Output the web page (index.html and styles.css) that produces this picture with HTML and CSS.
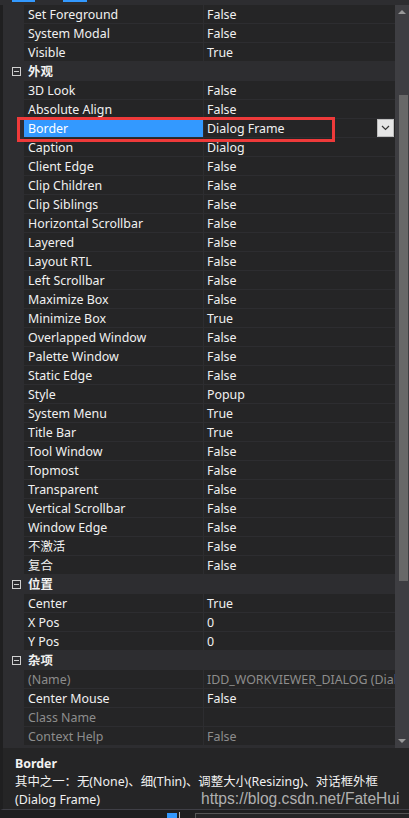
FILE: index.html
```html
<!DOCTYPE html>
<html>
<head>
<meta charset="utf-8">
<link rel="stylesheet" href="styles.css">
</head>
<body>
<div class="page">
  <div class="top"><span class="tab t1"></span><span class="tab t2"></span></div>
  <div class="main">
    <div class="grid">
      <div class="row"><div class="name">Set Foreground</div><div class="val">False</div></div>
      <div class="row"><div class="name">System Modal</div><div class="val">False</div></div>
      <div class="row"><div class="name">Visible</div><div class="val">True</div></div>
      <div class="cat"><span class="box"></span><span class="cat-t">外观</span></div>
      <div class="row"><div class="name">3D Look</div><div class="val">False</div></div>
      <div class="row"><div class="name">Absolute Align</div><div class="val">False</div></div>
      <div class="row sel"><div class="name">Border</div><div class="val">Dialog Frame<span class="dd"><svg width="9" height="6" viewBox="0 0 9 6"><path d="M1 1 L4.5 4.5 L8 1" fill="none" stroke="#333" stroke-width="1.2"/></svg></span></div></div>
      <div class="row"><div class="name">Caption</div><div class="val">Dialog</div></div>
      <div class="row"><div class="name">Client Edge</div><div class="val">False</div></div>
      <div class="row"><div class="name">Clip Children</div><div class="val">False</div></div>
      <div class="row"><div class="name">Clip Siblings</div><div class="val">False</div></div>
      <div class="row"><div class="name">Horizontal Scrollbar</div><div class="val">False</div></div>
      <div class="row"><div class="name">Layered</div><div class="val">False</div></div>
      <div class="row"><div class="name">Layout RTL</div><div class="val">False</div></div>
      <div class="row"><div class="name">Left Scrollbar</div><div class="val">False</div></div>
      <div class="row"><div class="name">Maximize Box</div><div class="val">False</div></div>
      <div class="row"><div class="name">Minimize Box</div><div class="val">True</div></div>
      <div class="row"><div class="name">Overlapped Window</div><div class="val">False</div></div>
      <div class="row"><div class="name">Palette Window</div><div class="val">False</div></div>
      <div class="row"><div class="name">Static Edge</div><div class="val">False</div></div>
      <div class="row"><div class="name">Style</div><div class="val">Popup</div></div>
      <div class="row"><div class="name">System Menu</div><div class="val">True</div></div>
      <div class="row"><div class="name">Title Bar</div><div class="val">True</div></div>
      <div class="row"><div class="name">Tool Window</div><div class="val">False</div></div>
      <div class="row"><div class="name">Topmost</div><div class="val">False</div></div>
      <div class="row"><div class="name">Transparent</div><div class="val">False</div></div>
      <div class="row"><div class="name">Vertical Scrollbar</div><div class="val">False</div></div>
      <div class="row"><div class="name">Window Edge</div><div class="val">False</div></div>
      <div class="row"><div class="name">不激活</div><div class="val">False</div></div>
      <div class="row"><div class="name">复合</div><div class="val">False</div></div>
      <div class="cat"><span class="box"></span><span class="cat-t">位置</span></div>
      <div class="row"><div class="name">Center</div><div class="val">True</div></div>
      <div class="row"><div class="name">X Pos</div><div class="val">0</div></div>
      <div class="row"><div class="name">Y Pos</div><div class="val">0</div></div>
      <div class="cat"><span class="box"></span><span class="cat-t">杂项</span></div>
      <div class="row dim"><div class="name">(Name)</div><div class="val">IDD_WORKVIEWER_DIALOG (Dialog)</div></div>
      <div class="row"><div class="name">Center Mouse</div><div class="val">False</div></div>
      <div class="row dim"><div class="name">Class Name</div><div class="val"></div></div>
      <div class="row dim"><div class="name">Context Help</div><div class="val">False</div></div>
      <div class="redbox"></div>
    </div>
    <div class="scroll">
      <div class="arr up"></div>
      <div class="track"><div class="thumb"></div></div>
      <div class="arr down"></div>
    </div>
  </div>
  <div class="desc">
    <div class="d-title">Border</div>
    <div class="d-text">其中之一：无(None)、细(Thin)、调整大小(Resizing)、对话框外框</div>
    <div class="d-text">(Dialog Frame)</div>
    <div class="mark">https://blog.csdn.net/FateHui</div>
  </div>
  <div class="bottom"><span class="btab"></span><span class="bglyph"></span><span class="bbox"></span></div>
</div>
</body>
</html>
```

FILE: styles.css
```css
html, body {
  margin: 0;
  padding: 0;
  background: #252526;
}
.page {
  width: 409px;
  height: 818px;
  overflow: hidden;
  font-family: "Noto Sans", "Noto Sans CJK SC", sans-serif;
  font-size: 12.4px;
  color: #f1f1f1;
  display: flex;
  flex-direction: column;
}
.top {
  height: 5px;
  background: #2d2d30;
  position: relative;
  flex: none;
}
.tab {
  position: absolute;
  top: 0;
  height: 2px;
  background: #3399ff;
}
.t1 { left: 12px; width: 23px; }
.t2 { left: 63px; width: 24px; }
.main {
  display: flex;
  height: 743px;
  flex: none;
}
.grid {
  flex: 1;
  position: relative;
  background: #2d2d30;
  border-left: 3px solid #1f1f20;
  overflow: hidden;
}
.row {
  display: flex;
  height: 18px;
  border-bottom: 1px solid #2d2d30;
  margin-left: 21px;
  line-height: 20px;
}
.name {
  width: 175px;
  padding-left: 4px;
  background: #252526;
  border-right: 1px solid #2d2d30;
  white-space: nowrap;
  overflow: hidden;
}
.val {
  flex: 1;
  padding-left: 3px;
  background: #252526;
  white-space: nowrap;
  overflow: hidden;
  position: relative;
}
.sel .name {
  background: #3399ff;
  color: #ffffff;
}
.dim .name, .dim .val {
  color: #8d8d8d;
}
.dd {
  position: absolute;
  right: 1px;
  top: 0px;
  width: 15px;
  height: 16px;
  background: #e6e6e6;
  border: 1px solid #bdbdbd;
  display: flex;
  align-items: center;
  justify-content: center;
}
.cat {
  display: flex;
  align-items: center;
  height: 18px;
  border-bottom: 1px solid #2d2d30;
  background: #2d2d30;
}
.box {
  width: 7px;
  height: 7px;
  border: 1px solid #d0d0d0;
  margin-left: 9px;
  position: relative;
}
.box::after {
  content: "";
  position: absolute;
  left: 1px;
  top: 3px;
  width: 5px;
  height: 1px;
  background: #d0d0d0;
}
.cat-t {
  margin-left: 7px;
  font-weight: bold;
}
.redbox {
  position: absolute;
  left: 14px;
  top: 112px;
  width: 312px;
  height: 19px;
  border: 3px solid #ee3a3a;
}
.scroll {
  width: 14px;
  flex: none;
  margin-top: -1px;
  background: #3e3e42;
  display: flex;
  flex-direction: column;
  align-items: center;
}
.arr {
  width: 0;
  height: 0;
  border-left: 4px solid transparent;
  border-right: 4px solid transparent;
  flex: none;
}
.up {
  border-bottom: 4px solid #999999;
  margin-top: 6px;
}
.down {
  border-top: 4px solid #999999;
  margin-bottom: 5px;
}
.track {
  flex: 1;
  width: 100%;
  position: relative;
}
.thumb {
  position: absolute;
  left: 4px;
  width: 9px;
  top: 81px;
  height: 486px;
  background: #686868;
}
.desc {
  height: 62px;
  flex: none;
  box-sizing: border-box;
  border-left: 3px solid #1f1f20;
  border-bottom: 1px solid #3f3f46;
  padding: 7px 0 0 12px;
  line-height: 18px;
  position: relative;
  background: #252526;
}
.d-title {
  font-weight: bold;
}
.mark {
  position: absolute;
  left: 198px;
  top: 42px;
  font-family: "Liberation Sans", Arial, sans-serif;
  font-size: 15.6px;
  line-height: 18px;
  color: #b0b0b0;
}
.bottom {
  flex: 1;
  position: relative;
  background: #1f1f20;
}
.btab {
  position: absolute;
  left: 167px;
  top: 3px;
  width: 10px;
  height: 6px;
  background: #3399ff;
}
.bglyph {
  position: absolute;
  left: 179px;
  top: 2px;
  width: 1px;
  height: 6px;
  background: #bbbbbb;
}
.bbox {
  position: absolute;
  left: 195px;
  top: 3px;
  width: 220px;
  height: 10px;
  border: 1px solid #555;
  background: #252526;
}
```
